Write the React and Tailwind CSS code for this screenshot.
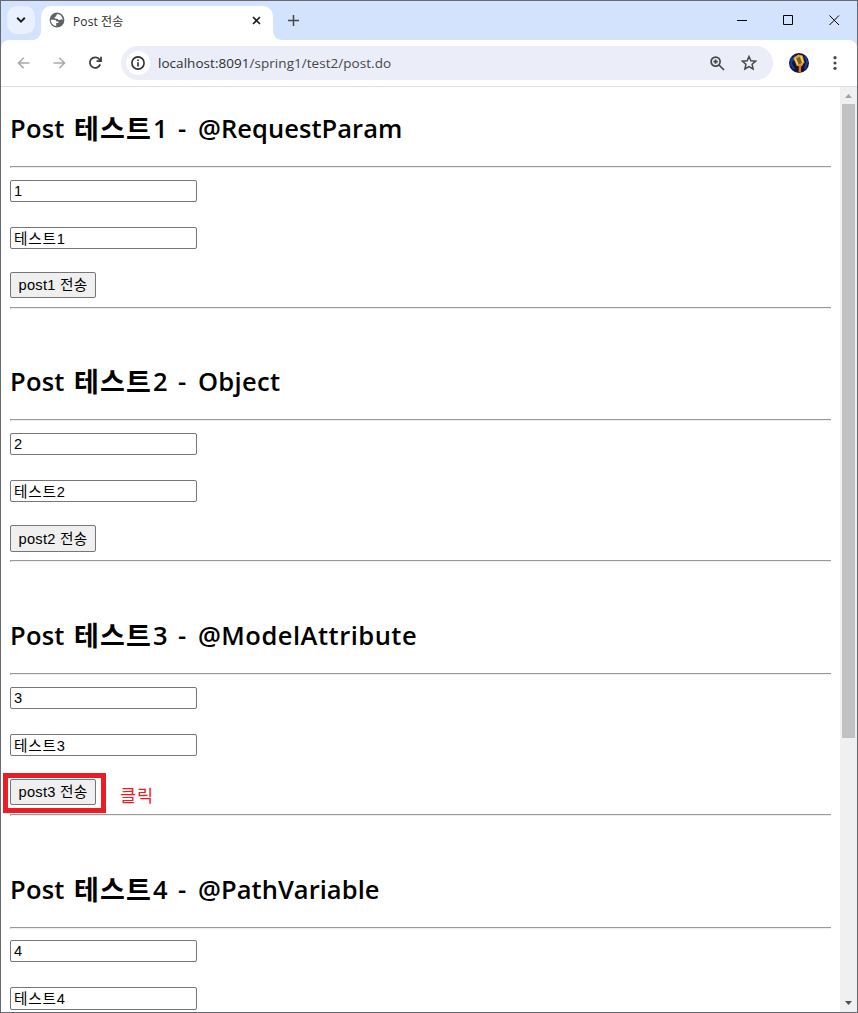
import React from "react";

const sections = [
  { n: 1, name: "@RequestParam", height: "h-[253px]", button: "h-[26px]", gap: "h-[9px]", tracking: "tracking-[0.05px]" },
  { n: 2, name: "Object", height: "h-[254px]", button: "h-[27px]", gap: "h-[8px]", tracking: "tracking-[0.3px]" },
  { n: 3, name: "@ModelAttribute", height: "h-[254px]", button: "h-[26px]", gap: "h-[9px]", tracking: "tracking-[0.5px]", marked: true },
  { n: 4, name: "@PathVariable", height: "h-[165px]", tracking: "tracking-[0.05px]", last: true },
];

function Rule() {
  return <div className="h-[2px] w-[821px] shrink-0 border-t border-l border-b border-[#9a9a9a] border-b-[#eeeeee]" />;
}

function Field({ value, numeric, tall }) {
  return (
    <input
      readOnly
      value={value}
      className={
        "block w-[187px] shrink-0 rounded-[2px] border border-[#767676] bg-white pl-[3px] pr-[4px] pt-0 text-[14.67px] text-black outline-none " +
        (numeric ? "pb-0 leading-[20px] " : "pb-[2px] leading-[18px] tracking-[0.8px] ") +
        (tall ? "h-[23px]" : "h-[22px]")
      }
    />
  );
}

function Section({ s }) {
  return (
    <section className={"flex shrink-0 flex-col items-start " + s.height}>
      <h2 className="flex h-[79px] w-full shrink-0 items-center whitespace-pre pt-[4px] font-['Open_Sans','Noto_Sans_CJK_KR',sans-serif] text-[25.5px] font-semibold leading-none text-black">
        <span className="w-[64px] shrink-0 tracking-[0.2px]">Post</span>
        <span className="w-[79px] shrink-0 pb-[2px] font-['Noto_Sans_CJK_KR',sans-serif] text-[27px] font-bold tracking-[1.2px]">테스트</span>
        <span className="w-[25px] shrink-0">{s.n}</span>
        <span className="w-[20px] shrink-0">-</span>
        <span className={"shrink-0 " + s.tracking}>{s.name}</span>
      </h2>
      <Rule />
      <div className={"shrink-0 " + (s.last ? "h-[11px]" : "h-[12px]")} />
      <Field value={String(s.n)} numeric />
      <div className="h-[25px] shrink-0" />
      <Field value={"테스트" + s.n} tall={s.last} />
      {!s.last && (
        <>
          <div className="h-[23px] shrink-0" />
          <div className="relative flex shrink-0">
            <button className={"w-[86px] whitespace-nowrap rounded-[2px] border border-[#767676] bg-[#efefef] text-center text-[14.67px] leading-[24px] tracking-[0.25px] text-black " + s.button}>
              post{s.n} 전송
            </button>
            {s.marked && (
              <>
                <div className="absolute left-[-7px] top-[-6px] h-[40px] w-[103px] border-[5px] border-[#ed1c24]" />
                <span className="absolute left-[110px] top-[3px] whitespace-nowrap font-['Noto_Sans_CJK_KR',sans-serif] text-[17.5px] leading-[25px] tracking-[0.8px] text-[#ed1c24]">클릭</span>
              </>
            )}
          </div>
          <div className={"shrink-0 " + s.gap} />
          <Rule />
        </>
      )}
    </section>
  );
}

function TabBar() {
  return (
    <div className="flex h-[39px] shrink-0 bg-[#d3e3fd]">
      <div className="ml-[6px] mt-[5px] flex h-[28px] w-[28px] items-center justify-center rounded-[10px] bg-[#e9f1fe]">
        <svg width="10" height="8" viewBox="0 0 10 8" fill="none" stroke="#1f1f1f" strokeWidth="2"><path d="M1.2 1.8 5 5.6 8.8 1.8" /></svg>
      </div>
      <svg className="mt-[29px] shrink-0" width="6" height="10" viewBox="0 0 6 10"><path d="M6 0v10H-4Q6 10 6 0Z" fill="#fff" /></svg>
      <div className="mt-[5px] flex h-[34px] w-[232px] items-start rounded-t-[10px] bg-white">
        <svg className="ml-[8px] mt-[6px] shrink-0" width="16" height="16" viewBox="0 0 16 16">
          <circle cx="8" cy="8" r="7.4" fill="#5f6368" />
          <path d="M8.6 2.2c-1.5 0-1 1.6-1.5 2.2-.7.7-1.7.2-1.7 1.3 0 1 1.6.9 2.8 1 .9.1 1 1.3 1.9 1.4 1.2.1 1.6-1 2.8-.7.4.1.7.5.9 1-.2-2.8-1.7-5.4-4.1-6.1Z" fill="#fff" />
          <path d="M1.8 7.7h3.6c1.3 0 1.9.7 1.9 1.9H8.8c.5 0 .7.4.7.8v.7H7.2v2.8C4.1 13.8 1.9 11.2 1.8 7.7Z" fill="#fff" />
        </svg>
        <span className="ml-[8px] mt-[7px] w-[179px] font-['Open_Sans','Noto_Sans_CJK_KR',sans-serif] text-[12px] leading-[18px] tracking-[0.1px] text-[#2b2b2b]">Post 전송</span>
        <svg className="mt-[10px] shrink-0" width="9" height="9" viewBox="0 0 9 9" stroke="#1f1f1f" strokeWidth="1.6"><path d="m1 1 7 7M8 1 1 8" /></svg>
      </div>
      <svg className="mt-[29px] shrink-0" width="10" height="10" viewBox="0 0 10 10"><path d="M0 0v10h10Q0 10 0 0Z" fill="#fff" /></svg>
      <svg className="ml-[5px] mt-[14px] shrink-0" width="11" height="11" viewBox="0 0 11 11" stroke="#444746" strokeWidth="1.5"><path d="M5.5 0v11M0 5.5h11" /></svg>
      <div className="ml-auto flex pr-[17px] pt-[14px]">
        <svg className="mr-[36px]" width="10" height="11" viewBox="0 0 10 11" stroke="#000"><path d="M0 5.5h10" /></svg>
        <svg className="mr-[35px]" width="11" height="11" viewBox="0 0 11 11" fill="none" stroke="#000"><path d="M.5.5h9v9h-9z" /></svg>
        <svg width="11" height="11" viewBox="0 0 11 11" stroke="#000" strokeWidth="1"><path d="m.5.5 9.5 9.5m0-9.5L.5 10" /></svg>
      </div>
    </div>
  );
}

function Toolbar() {
  return (
    <div className="bg-[#d3e3fd]">
      <div className="flex h-[47px] items-center rounded-t-[8px] border-b border-[#dedfe1] bg-white">
        <svg className="ml-[16px]" width="13" height="12" viewBox="0 0 13 12" fill="none" stroke="#a9abac" strokeWidth="1.6"><path d="M12.5 6H1.5M6.7.8 1.5 6l5.2 5.2" /></svg>
        <svg className="ml-[23px]" width="13" height="12" viewBox="0 0 13 12" fill="none" stroke="#a9abac" strokeWidth="1.6"><path d="M.5 6h11M6.3.8 11.5 6l-5.2 5.2" /></svg>
        <svg className="ml-[22px]" width="15" height="14" viewBox="0 0 15 14" fill="none" stroke="#3c3d3d" strokeWidth="1.8"><path d="M12.2 8.4a5.3 5.3 0 1 1-1-5.3l1.4 1.5" /><path d="M13 .8v4.4H8.5" /></svg>
        <div className="ml-[18px] flex h-[34px] w-[652px] items-center rounded-full bg-[#ebeef8] pl-[5px]">
          <div className="flex h-[24px] w-[24px] items-center justify-center rounded-full bg-white">
            <svg width="14" height="14" viewBox="0 0 14 14" fill="none" stroke="#2c2d2d" strokeWidth="1.6"><circle cx="7" cy="7" r="6.1" /><path d="M7 6.2v4.2M7 3.4V5" /></svg>
          </div>
          <span className="ml-[8px] w-[552px] whitespace-nowrap font-['Open_Sans',sans-serif] text-[13.5px] leading-[20px] tracking-[0.04px] text-[#474747]"><span className="text-[#303030]">localhost:8091</span>/spring1/test2/post.do</span>
          <svg className="shrink-0" width="15" height="15" viewBox="0 0 15 15" fill="none" stroke="#474747" strokeWidth="1.7"><circle cx="5.6" cy="5.6" r="4.5" /><path d="m9 9 5 5M3.4 5.6H7.8M5.6 3.4v4.4" /></svg>
          <svg className="ml-[16px] shrink-0" width="16" height="16" viewBox="0 0 16 16" fill="none" stroke="#474747" strokeWidth="1.5"><path d="m8 1.5 1.9 4.3 4.7.4-3.5 3.1 1 4.6L8 11.5l-4.1 2.4 1-4.6-3.5-3.1 4.7-.4Z" /></svg>
        </div>
        <svg className="ml-[16px]" width="20" height="20" viewBox="0 0 20 20">
          <circle cx="10" cy="10" r="10" fill="#101536" />
          <path d="M3 4.5 2 11l3 5M16 3l2 6-2 7M6 2.5 4.5 8" fill="none" stroke="#173da0" strokeWidth="2" />
          <path d="m4.4 5 4.8-3.6 4.5 1.2 1.6 6.6-2.6 4.3-4.9-.6Z" fill="#e0a02c" />
          <path d="m7.2 5.6 3.6-1.6 2.2 5.7-3.2 1.7Z" fill="#745c37" />
          <path d="m6 5 2.8 6.8M11.8 3l2.2 6.5" stroke="#f6dc4e" strokeWidth="1.2" />
          <path d="m11 12-.2 7.5" stroke="#f27224" strokeWidth="2.2" />
        </svg>
        <svg className="ml-[24px]" width="4" height="14" viewBox="0 0 4 14" fill="#474747"><circle cx="2" cy="1.7" r="1.6" /><circle cx="2" cy="7" r="1.6" /><circle cx="2" cy="12.3" r="1.6" /></svg>
      </div>
    </div>
  );
}

export default function App() {
  return (
    <div className="flex h-[1013px] w-[858px] flex-col overflow-hidden border border-[#67696e] bg-white font-['Liberation_Sans','Noto_Sans_CJK_KR',sans-serif]">
      <TabBar />
      <Toolbar />
      <div className="flex min-h-0 flex-1">
        <main className="flex min-w-0 flex-1 flex-col overflow-hidden pl-[9px]">
          {sections.map((s) => <Section key={s.n} s={s} />)}
        </main>
        <div className="flex w-[17px] shrink-0 flex-col items-center bg-[#f0f0f0]">
          <svg className="mt-[7px] shrink-0" width="7" height="4" viewBox="0 0 7 4" fill="#a3a3a3"><path d="M3.5 0 7 4H0Z" /></svg>
          <div className="mt-[6px] h-[634px] w-[13px] bg-[#c1c1c1]" />
          <svg className="mb-[7px] mt-auto shrink-0" width="7" height="4" viewBox="0 0 7 4" fill="#505050"><path d="M0 0h7L3.5 4Z" /></svg>
        </div>
      </div>
    </div>
  );
}
